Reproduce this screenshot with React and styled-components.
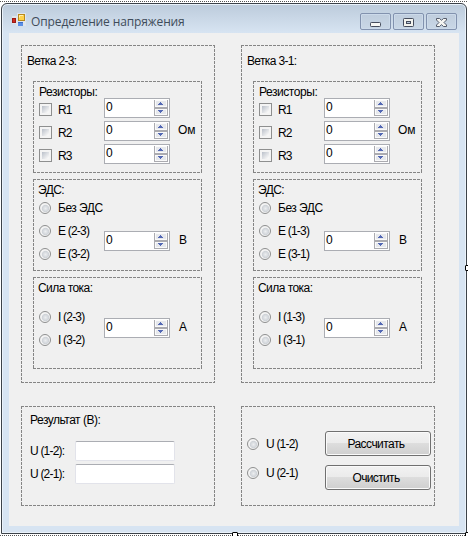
import React from "react";
import styled, { createGlobalStyle } from "styled-components";

const Global = createGlobalStyle`
  * { box-sizing: border-box; }
  body { margin: 0; background: #fff; overflow: hidden; }
`;

const Designer = styled.div`
  position: relative;
  width: 468px;
  height: 536px;
  padding: 3px 1px 2px 1px;
  background:
    repeating-linear-gradient(90deg, #555 0 1px, #fff 1px 2px) 0 1px / 100% 1px no-repeat,
    repeating-linear-gradient(90deg, #555 0 1px, #fff 1px 2px) 0 535px / 100% 1px no-repeat,
    #fff;
  font: 12px/14px "Liberation Sans", Arial, sans-serif;
  color: #000;
`;

const Handle = styled.i`
  position: absolute;
  left: ${(p) => p.$x}px;
  top: ${(p) => p.$y}px;
  width: 6px;
  height: 6px;
  border: 1px solid #000;
  border-radius: 1px;
  background: #fff;
`;

const Window = styled.div`
  width: 466px;
  height: 531px;
  border: 1px solid #3c4249;
  border-radius: 6px 6px 0 0;
  box-shadow: inset 0 0 0 1px #eaf2fa;
  background: linear-gradient(#bccbdb, #d7e4f2 29px);
  display: flex;
  flex-direction: column;
  padding: 0 7px 7px;
`;

const TitleBar = styled.header`
  height: 29px;
  display: flex;
  align-items: flex-start;
  padding: 9px 2px 0 3px;
`;

const Title = styled.h1`
  flex: 1;
  margin: 2px 0 0 5px;
  font: 12px/14px "Open Sans", "Noto Sans", sans-serif;
  letter-spacing: ${(p) => p.$ls}px;
  color: #3f4c5a;
  white-space: nowrap;
`;

const Controls = styled.div`
  display: flex;
  gap: 2px;
`;

const ControlButton = styled.button`
  width: 31px;
  height: 17px;
  padding: 0;
  border: 1px solid #8292ae;
  border-radius: 2px;
  box-shadow: inset 0 0 0 1px #ccdaea;
  background: linear-gradient(#bfcddd, #c9d7e6);
  svg { display: block; margin: 0 auto; }
`;

const Client = styled.main`
  flex: 1;
  display: grid;
  grid-template-columns: 194px 194px;
  grid-template-rows: 338px 100px;
  gap: 23px 26px;
  padding: 12px;
  background: #f0f0f0;
`;

const Panel = styled.section`
  --h: repeating-linear-gradient(90deg, #858585 0 3px, transparent 3px 4px);
  --v: repeating-linear-gradient(180deg, #858585 0 3px, transparent 3px 4px);
  background:
    var(--h) top / 100% 1px no-repeat,
    var(--h) bottom / 100% 1px no-repeat,
    var(--v) left / 1px 100% no-repeat,
    var(--v) right / 1px 100% no-repeat;
`;

const Branch = styled(Panel)`
  display: grid;
  grid-template-rows: 21px 92px 92px 92px;
  row-gap: 6px;
  padding: 9px 13px 0 12px;
`;

const BranchTitle = styled.div`
  margin-left: -6px;
`;

const Group = styled(Panel)`
  padding: 4px 0 0 6px;
`;

const GroupTitle = styled.div`
  height: ${(p) => p.$h}px;
  margin-left: ${(p) => p.$shift || 0}px;
`;

const Fields = styled.div`
  display: flex;
`;

const Options = styled.div`
  width: 65px;
  display: flex;
  flex-direction: column;
  gap: ${(p) => p.$gap || 1}px;
  padding-top: ${(p) => p.$top || 0}px;
`;

const Option = styled.label`
  height: 22px;
  display: flex;
  align-items: center;
  gap: 7px;
`;

const CheckOption = styled(Option)`
  gap: 6px;
`;

const Label = styled.span`
  letter-spacing: ${(p) => p.$ls || 0}px;
  white-space: nowrap;
`;

const CheckLabel = styled(Label)`
  padding-top: 2px;
`;

const Check = styled.i`
  width: 13px;
  height: 13px;
  flex: none;
  border: 1px solid #8e8f8f;
  background: linear-gradient(135deg, #b9bfc9, #f6f6f6 85%) content-box, #f4f4f4;
  padding: 2px;
`;

const Radio = styled.i`
  width: 12px;
  height: 12px;
  flex: none;
  border: 1px solid #8e8f8f;
  border-radius: 50%;
  background: radial-gradient(circle at 55% 55%, #eceef0 0, #cfd3d8 3.2px, #f4f4f4 4.2px);
`;

const Numbers = styled.div`
  width: 66px;
  display: flex;
  flex-direction: column;
  gap: 3px;
  padding-top: ${(p) => p.$top || 0}px;
`;

const NumberBox = styled.div`
  height: 20px;
  display: flex;
  justify-content: space-between;
  border: 1px solid #abadb3;
  background: #fff;
  padding: 1px;
`;

const Value = styled.span`
  line-height: 14px;
`;

const Unit = styled.span`
  margin: ${(p) => p.$top}px 0 0 ${(p) => p.$left || 9}px;
`;

const Result = styled(Panel)`
  padding: 7px 0 0 9px;
`;

const ResultRow = styled.div`
  display: flex;
  width: 145px;
  height: 20px;
  margin-top: ${(p) => p.$top}px;
  justify-content: space-between;
  align-items: center;
`;

const ResultInput = styled.input`
  width: 100px;
  height: 20px;
  border: 1px solid #e2e3ea;
  border-top-color: #abadb3;
  border-radius: 2px;
  background: #fff;
`;

const Actions = styled(Panel)`
  display: flex;
  justify-content: space-between;
  padding: 25px 4px 0 6px;
`;

const Buttons = styled.div`
  width: 106px;
  display: flex;
  flex-direction: column;
  gap: 9px;
`;

const Button = styled.button`
  height: 25px;
  padding: 0 4px 0 0;
  border: 1px solid #707070;
  border-radius: 3px;
  box-shadow: inset 0 0 0 1px #fafafa;
  background: linear-gradient(#f2f2f2, #ebebeb 49%, #dddddd 50%, #cfcfcf);
  font: inherit;
  color: #000;
  letter-spacing: ${(p) => p.$ls || 0}px;
`;

const AppIcon = () => (
  <svg width="14" height="14" viewBox="0 0 14 14">
    <path d="M0 3H5V0H14V13H4V11H0Z" fill="#dfe5ec" />
    <rect x="6.5" y="1.5" width="6" height="6" fill="#ffd24a" stroke="#b98a1c" />
    <path d="M7.500 4.500V2.500H11" fill="none" stroke="#fff0b0" />
    <rect x="0.500" y="5.500" width="3" height="4" fill="#cf2a20" stroke="#9c1a14" />
    <rect x="6" y="9" width="5" height="4" fill="#5b8fe6" />
    <path d="M6 9.500H11" stroke="#3f6cc4" />
  </svg>
);

const Minimize = () => (
  <svg width="12" height="12" viewBox="0 0 12 12">
    <rect x="0.500" y="6.500" width="10" height="4" rx=".8" fill="#f7f7f4" stroke="#454c5c" />
  </svg>
);

const Maximize = () => (
  <svg width="12" height="12" viewBox="0 0 12 12">
    <rect x="0.500" y="2.500" width="10" height="8" rx=".8" fill="#f3f3ee" stroke="#454c5c" />
    <rect x="3.500" y="5.500" width="4" height="2" fill="#b8c8dc" stroke="#454c5c" />
  </svg>
);

const Close = () => (
  <svg width="12" height="12" viewBox="0 0 12 12">
    <path
      d="M.5 2.500H3.500L5.500 4.300L7.500 2.500H10.500V4L8 6.500L10.500 9V10.500H7.500L5.500 8.700L3.500 10.500H.5V9L3 6.500L.5 4Z"
      fill="#f5f5f2"
      stroke="#454c5c"
      strokeWidth=".9"
    />
  </svg>
);

const Spinner = () => (
  <svg width="14" height="16" viewBox="0 0 14 16" shapeRendering="crispEdges">
    <path d="M0 0H14V16H0Z" fill="#ababb0" />
    <path d="M1 0H13V7H1ZM1 9H13V15H1Z" fill="#fafafa" />
    <path d="M2 1H12V6H2ZM2 10H12V14H2Z" fill="#e6e8ec" />
    <path d="M6 2H7V3H8V4H9V5H4V4H5V3H6Z" fill="#5368b4" />
    <path d="M4 10H9V11H8V12H7V13H6V12H5V11H4Z" fill="#5368b4" />
  </svg>
);

const NumberField = () => (
  <NumberBox>
    <Value>0</Value>
    <Spinner />
  </NumberBox>
);

const RadioOption = ({ children, ls }) => (
  <Option>
    <Radio />
    <Label $ls={ls}>{children}</Label>
  </Option>
);

const BranchPanel = ({ title, first, second }) => (
  <Branch>
    <BranchTitle>
      <Label $ls={-0.65}>{title}</Label>
    </BranchTitle>
    <Group>
      <GroupTitle $h={13}>
        <Label $ls={-0.45}>Резисторы:</Label>
      </GroupTitle>
      <Fields>
        <Options>
          {["R1", "R2", "R3"].map((name) => (
            <CheckOption key={name}>
              <Check />
              <CheckLabel $ls={-1}>{name}</CheckLabel>
            </CheckOption>
          ))}
        </Options>
        <Numbers>
          <NumberField />
          <NumberField />
          <NumberField />
        </Numbers>
        <Unit $top={25} $left={8}>Ом</Unit>
      </Fields>
    </Group>
    <Group>
      <GroupTitle $h={14} $shift={-1}>
        <Label $ls={-0.6}>ЭДС:</Label>
      </GroupTitle>
      <Fields>
        <Options>
          <RadioOption ls={-0.5}>Без ЭДС</RadioOption>
          <RadioOption ls={-0.8}>E ({first})</RadioOption>
          <RadioOption ls={-0.8}>E ({second})</RadioOption>
        </Options>
        <Numbers $top={34}>
          <NumberField />
        </Numbers>
        <Unit $top={36}>В</Unit>
      </Fields>
    </Group>
    <Group>
      <GroupTitle $h={25} $shift={-1}>
        <Label $ls={-0.55}>Сила тока:</Label>
      </GroupTitle>
      <Fields>
        <Options>
          <RadioOption ls={-0.8}>I ({first})</RadioOption>
          <RadioOption ls={-0.8}>I ({second})</RadioOption>
        </Options>
        <Numbers $top={12}>
          <NumberField />
        </Numbers>
        <Unit $top={14}>А</Unit>
      </Fields>
    </Group>
  </Branch>
);

export default function App() {
  return (
    <Designer>
      <Global />
      <Window>
        <TitleBar>
          <AppIcon />
          <Title $ls={-0.12}>Определение напряжения</Title>
          <Controls>
            <ControlButton><Minimize /></ControlButton>
            <ControlButton><Maximize /></ControlButton>
            <ControlButton><Close /></ControlButton>
          </Controls>
        </TitleBar>
        <Client>
          <BranchPanel title="Ветка 2-3:" first="2-3" second="3-2" />
          <BranchPanel title="Ветка 3-1:" first="1-3" second="3-1" />
          <Result>
            <Label $ls={-0.5}>Результат (В):</Label>
            <ResultRow $top={14}>
              <Label $ls={-0.8}>U (1-2):</Label>
              <ResultInput />
            </ResultRow>
            <ResultRow $top={3}>
              <Label $ls={-0.8}>U (2-1):</Label>
              <ResultInput />
            </ResultRow>
          </Result>
          <Actions>
            <Options $gap={7} $top={2}>
              <RadioOption ls={-0.8}>U (1-2)</RadioOption>
              <RadioOption ls={-0.8}>U (2-1)</RadioOption>
            </Options>
            <Buttons>
              <Button $ls={-0.55}>Рассчитать</Button>
              <Button $ls={-0.65}>Очистить</Button>
            </Buttons>
          </Actions>
        </Client>
      </Window>
      <Handle $x={465} $y={265} />
      <Handle $x={232} $y={532} />
      <Handle $x={465} $y={532} />
    </Designer>
  );
}
